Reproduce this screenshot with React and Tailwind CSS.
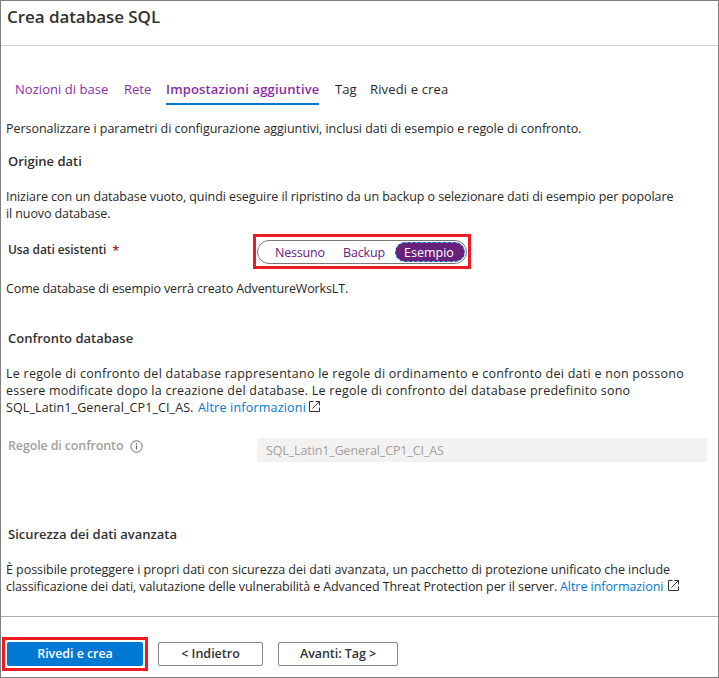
function ExternalIcon({ className }) {
  return (
    <svg className={className} width="11" height="11" viewBox="0 0 11 11" fill="none" stroke="#323130">
      <path d="M4.5 .5H.5v10h10V6.5M6.5 .5h4v4M10.3 .7L3.5 7.5" />
    </svg>
  );
}

function InfoIcon() {
  return (
    <svg className="mt-[3px] ml-[7px]" width="13" height="13" viewBox="0 0 13 13" fill="none" stroke="#605e5c">
      <circle cx="6.5" cy="6.5" r="5.7" strokeWidth=".9" />
      <path d="M6.5 5.5v4M6.5 3.2v1.2" strokeWidth="1.1" />
    </svg>
  );
}

function Heading({ children, className }) {
  return <h2 className={`h-[18px] pl-[2px] text-[13px] leading-[18px] font-semibold text-[#323130] ${className}`}>{children}</h2>;
}

export default function App() {
  return (
    <div className="flex h-[678px] w-[719px] flex-col overflow-hidden border border-[#7f7f7f] bg-white font-['Open_Sans','Noto_Sans',sans-serif] text-[12.5px] leading-[17px] whitespace-nowrap text-[#292827]">
      <header className="h-[45px] shrink-0 border-b border-[#d2d2d2] pt-[4px] pl-[6px]">
        <h1 className="text-[17px] leading-6 font-semibold tracking-[-0.06px] text-[#323130]">Crea database SQL</h1>
      </header>

      <nav className="mt-[34px] ml-[14px] flex h-[25px] shrink-0 text-[13px] leading-[18px]">
        <span className="w-[109px] tracking-[0.04px] text-[#8a2da5]">Nozioni di base</span>
        <span className="w-[42px] text-[#8a2da5]">Rete</span>
        <span className="w-[153px] border-b-2 border-[#0078d4] font-semibold tracking-[0.16px] text-[#8a2da5]">Impostazioni aggiuntive</span>
        <span className="ml-[16px] w-[35px]">Tag</span>
        <span className="tracking-[0.14px]">Rivedi e crea</span>
      </nav>

      <main className="h-[511px] shrink-0 pl-[5px]">
        <p className="mt-[15px] tracking-[-0.04px]">Personalizzare i parametri di configurazione aggiuntivi, inclusi dati di esempio e regole di confronto.</p>
        <Heading className="mt-[15px]">Origine dati</Heading>
        <p className="mt-[18px] tracking-[-0.065px]">Iniziare con un database vuoto, quindi eseguire il ripristino da un backup o selezionare dati di esempio per popolare</p>
        <p className="tracking-[-0.1px]">il nuovo database.</p>

        <div className="mt-[12px] flex h-[35px]">
          <div className="w-[247px] pt-[7px] pl-[2px] text-[12px] font-semibold tracking-[-0.08px] text-[#323130]">
            Usa dati esistenti<span className="relative top-px ml-[6px] text-[13px] leading-none text-[#a4262c]">*</span>
          </div>
          <div className="h-[35px] w-[218px] border-[3px] border-[#ed1c24] pt-[3px] pl-px">
            <div className="flex h-6 w-[210px] rounded-full border border-[#7a7876] pt-px text-[#6b2080]">
              <span className="w-[68px] pt-[2px] pl-[17px] tracking-[-0.2px]">Nessuno</span>
              <span className="w-[69px] pt-[2px] pl-[17px] tracking-[-0.15px]">Backup</span>
              <span className="h-5 w-[70px] rounded-full border border-dashed border-[#2cc3f5] bg-[#68217a] pt-px pl-[8px] text-white">Esempio</span>
            </div>
          </div>
        </div>

        <p className="mt-[11px] tracking-[-0.13px]">Come database di esempio verrà creato AdventureWorksLT.</p>
        <Heading className="mt-[32px]">Confronto database</Heading>
        <p className="mt-[18px] tracking-[0.255px]">Le regole di confronto del database rappresentano le regole di ordinamento e confronto dei dati e non possono</p>
        <p className="tracking-[0.24px]">essere modificate dopo la creazione del database. Le regole di confronto del database predefinito sono</p>
        <p className="flex">
          <span className="w-[192px] tracking-[0.11px]">SQL_Latin1_General_CP1_CI_AS.</span>
          <span className="tracking-[0.2px] text-[#0078d4]">Altre informazioni</span>
          <ExternalIcon className="mt-[2px] ml-[3px]" />
        </p>

        <div className="mt-[21px] flex h-[25px]">
          <div className="flex w-[251px] pl-[2px] font-semibold tracking-[-0.14px] text-[#a19f9d]">
            Regole di confronto
            <InfoIcon />
          </div>
          <div className="mt-px h-6 w-[450px] rounded-xs bg-[#f3f2f1] pt-[4px] pl-[9px] tracking-[-0.12px] text-[#a19f9d]">SQL_Latin1_General_CP1_CI_AS</div>
        </div>

        <Heading className="mt-[63px]">Sicurezza dei dati avanzata</Heading>
        <p className="mt-[18px] tracking-[-0.05px]">È possibile proteggere i propri dati con sicurezza dei dati avanzata, un pacchetto di protezione unificato che include</p>
        <p className="flex">
          <span className="w-[554px] tracking-[-0.09px]">classificazione dei dati, valutazione delle vulnerabilità e Advanced Threat Protection per il server.</span>
          <span className="tracking-[-0.06px] text-[#0078d4]">Altre informazioni</span>
          <ExternalIcon className="mt-[2px] ml-[5px]" />
        </p>
      </main>

      <footer className="flex h-[61px] shrink-0 border-t border-[#b0aeac] pl-px font-semibold text-[#323130]">
        <div className="mt-[20px] h-[34px] w-[146px] border-[3px] border-[#ed1c24] p-[2px]">
          <button className="block h-6 w-[136px] rounded-xs bg-[#0078d4] pb-px tracking-[-0.06px] text-white">Rivedi e crea</button>
        </div>
        <button className="mt-[25px] ml-[10px] h-6 w-[105px] rounded-xs border border-[#8a8886] pb-px">&lt; Indietro</button>
        <button className="mt-[25px] ml-[15px] h-6 w-[120px] rounded-xs border border-[#8a8886] pb-px tracking-[-0.06px]">Avanti: Tag &gt;</button>
      </footer>
    </div>
  );
}
